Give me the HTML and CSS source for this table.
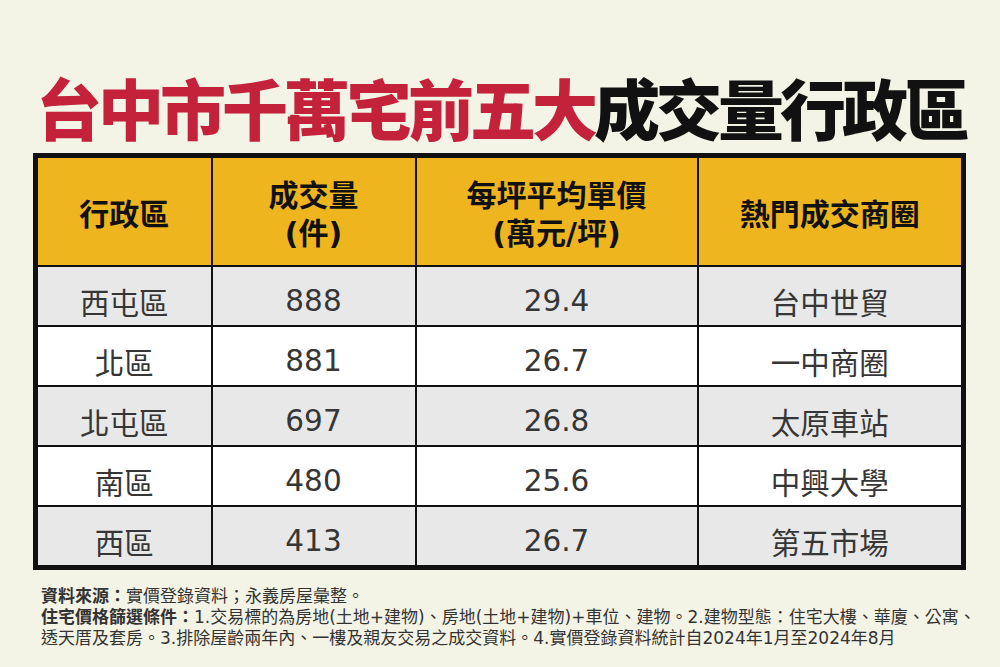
FILE: index.html
```html
<!DOCTYPE html>
<html lang="zh-Hant">
<head>
<meta charset="utf-8">
<link rel="stylesheet" href="styles.css">
</head>
<body>
<div class="page">
  <h1 class="title"><span class="red">台中市千萬宅前五大</span><span class="black">成交量行政區</span></h1>
  <table class="data">
    <colgroup>
      <col class="c1"><col class="c2"><col class="c3"><col class="c4">
    </colgroup>
    <thead>
      <tr>
        <th>行政區</th>
        <th>成交量<br>(件)</th>
        <th>每坪平均單價<br>(萬元/坪)</th>
        <th>熱門成交商圈</th>
      </tr>
    </thead>
    <tbody>
      <tr class="grey"><td>西屯區</td><td>888</td><td>29.4</td><td>台中世貿</td></tr>
      <tr class="white"><td>北區</td><td>881</td><td>26.7</td><td>一中商圈</td></tr>
      <tr class="grey"><td>北屯區</td><td>697</td><td>26.8</td><td>太原車站</td></tr>
      <tr class="white"><td>南區</td><td>480</td><td>25.6</td><td>中興大學</td></tr>
      <tr class="grey"><td>西區</td><td>413</td><td>26.7</td><td>第五市場</td></tr>
    </tbody>
  </table>
  <div class="notes">
    <p><b>資料來源：</b>實價登錄資料；永義房屋彙整。</p>
    <p><b>住宅價格篩選條件：</b>1.交易標的為房地(土地+建物)、房地(土地+建物)+車位、建物。2.建物型態：住宅大樓、華廈、公寓、<br>透天厝及套房。3.排除屋齡兩年內、一樓及親友交易之成交資料。4.實價登錄資料統計自2024年1月至2024年8月</p>
  </div>
</div>
</body>
</html>
```

FILE: styles.css
```css
html, body {
  margin: 0;
  padding: 0;
  background: #f3f3e6;
}
.page {
  width: 1000px;
  height: 667px;
  box-sizing: border-box;
  padding: 70px 34px 0 33px;
  font-family: "DejaVu Sans", "Noto Sans CJK TC", sans-serif;
  color: #333;
}
.title {
  margin: 0 0 0 3px;
  font-family: "Noto Sans CJK TC", sans-serif;
  font-weight: 900;
  font-size: 66px;
  line-height: 72px;
  letter-spacing: -4px;
  white-space: nowrap;
}
.red { color: #c3223a; }
.black { color: #111; }
.data {
  margin-top: 11px;
  width: 933px;
  border-collapse: collapse;
  border: 5px solid #111;
  table-layout: fixed;
}
.c1 { width: 176px; }
.c2 { width: 204px; }
.c3 { width: 282px; }
.c4 { width: 266px; }
.data th, .data td {
  border: 2px solid #111;
  text-align: center;
  padding: 0;
}
.data th {
  background: #eeb51f;
  color: #111;
  font-weight: 700;
  font-size: 30px;
  line-height: 38px;
  height: 101px;
  padding-top: 6px;
}
.data td {
  height: 49px;
  padding-top: 9px;
  font-size: 29.5px;
  color: #363636;
}
.grey td { background: #e8e8e8; }
.white td { background: #ffffff; }
.notes {
  margin: 16px -14px 0 8px;
  font-size: 17px;
  line-height: 21px;
  color: #333;
  white-space: nowrap;
}
.notes p { margin: 0; }
.notes b { font-weight: 700; }
```
